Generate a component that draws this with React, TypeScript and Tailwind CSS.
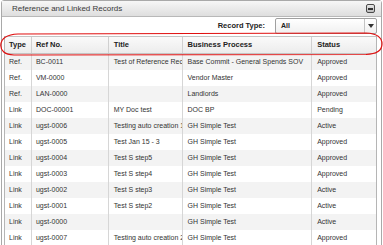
import React from "react";

const rows: [string, string, string, string, string][] = [
  ["Ref.", "BC-0011", "Test of Reference Records", "Base Commit - General Spends SOV", "Approved"],
  ["Ref.", "VM-0000", "", "Vendor Master", "Approved"],
  ["Ref.", "LAN-0000", "", "Landlords", "Approved"],
  ["Link", "DOC-00001", "MY Doc test", "DOC BP", "Pending"],
  ["Link", "ugst-0006", "Testing auto creation 1", "GH Simple Test", "Active"],
  ["Link", "ugst-0005", "Test Jan 15 - 3", "GH Simple Test", "Approved"],
  ["Link", "ugst-0004", "Test S step5", "GH Simple Test", "Approved"],
  ["Link", "ugst-0003", "Test S step4", "GH Simple Test", "Approved"],
  ["Link", "ugst-0002", "Test S step3", "GH Simple Test", "Active"],
  ["Link", "ugst-0001", "Test S step2", "GH Simple Test", "Active"],
  ["Link", "ugst-0000", "", "GH Simple Test", "Active"],
  ["Link", "ugst-0007", "Testing auto creation 2", "GH Simple Test", "Approved"],
];

const cols = ["w-[27px] pl-[4px]", "w-[77px] pl-[4px]", "w-[74px] pl-[5px]", "w-[130px] pl-[5px]", "w-[64px] pl-[5px]"];

export default function App() {
  return (
    <div className="relative w-[383px] h-[245px] overflow-hidden bg-white font-['Liberation_Sans',Arial,sans-serif]">
      <div className="ml-[1px] w-[381px] h-[260px] border border-[#a9a9a9] rounded-t-[3px] bg-white">
        <div className="h-[16px] flex items-center justify-between pl-[10px] pr-[6px] bg-gradient-to-b from-[#f7f7f7] to-[#dedede] border-b border-[#b8b8b8]">
          <span className="text-[8px] text-[#3a3a3a] leading-none">Reference and Linked Records</span>
          <div className="w-[9px] h-[9px] rounded-[2px] border border-[#4a4a4a] bg-gradient-to-b from-[#e8e8e8] to-[#bdbdbd] flex items-center justify-center">
            <div className="w-[5px] h-[2px] bg-[#333]" />
          </div>
        </div>
        <div className="h-[18px] flex items-center justify-end pr-[4px]">
          <span className="text-[7.5px] font-bold text-[#222] mr-[10px]">Record Type:</span>
          <div className="w-[102px] h-[16px] rounded-[2px] border border-[#a0a0a0] bg-gradient-to-b from-white to-[#f0f0f0] flex items-center">
            <span className="flex-1 pl-[5px] text-[7px] font-bold text-[#222]">All</span>
            <div className="w-[12px] h-full border-l border-[#c4c4c4] flex items-center justify-center">
              <svg width="6" height="4" viewBox="0 0 6 4"><path d="M0 0 H6 L3 4 Z" fill="#333" /></svg>
            </div>
          </div>
        </div>
        <div className="ml-[2px] w-[373px] border-l border-r border-[#b5b5b5] mt-[1px]">
          <div className="flex h-[18px] bg-gradient-to-b from-[#fafafa] to-[#ececec] border-t border-b border-[#c4c4c4]">
            {["Type", "Ref No.", "Title", "Business Process", "Status"].map((h, i) => (
              <div key={h} className={`${cols[i]} ${i < 4 ? "border-r border-[#d0d0d0]" : ""} flex items-center text-[7.5px] font-bold text-[#222] whitespace-nowrap overflow-hidden`}>
                {h}
              </div>
            ))}
          </div>
          {rows.map((r, ri) => (
            <div key={ri} className={`flex h-[16px] ${ri % 2 === 0 ? "bg-[#f3f3f3]" : "bg-white"}`}>
              {r.map((c, i) => (
                <div key={i} className={`${cols[i]} ${i < 4 ? "border-r border-[#d6d6d6]" : ""} flex items-center text-[7px] text-[#333] whitespace-nowrap overflow-hidden`}>
                  {c}
                </div>
              ))}
            </div>
          ))}
        </div>
      </div>
      <svg className="absolute left-0 top-[30px]" width="383" height="28" viewBox="0 0 383 28">
        <path
          d="M18 4 L366 3 C377 3.5 382 8 382 14 C382 20 377 24 366 24.5 L14 25 C4 24.5 0.5 20 0.8 15 C1.2 9 6 4.5 18 4 Z"
          fill="none"
          stroke="#e01010"
          strokeWidth="1.2"
        />
      </svg>
    </div>
  );
}
